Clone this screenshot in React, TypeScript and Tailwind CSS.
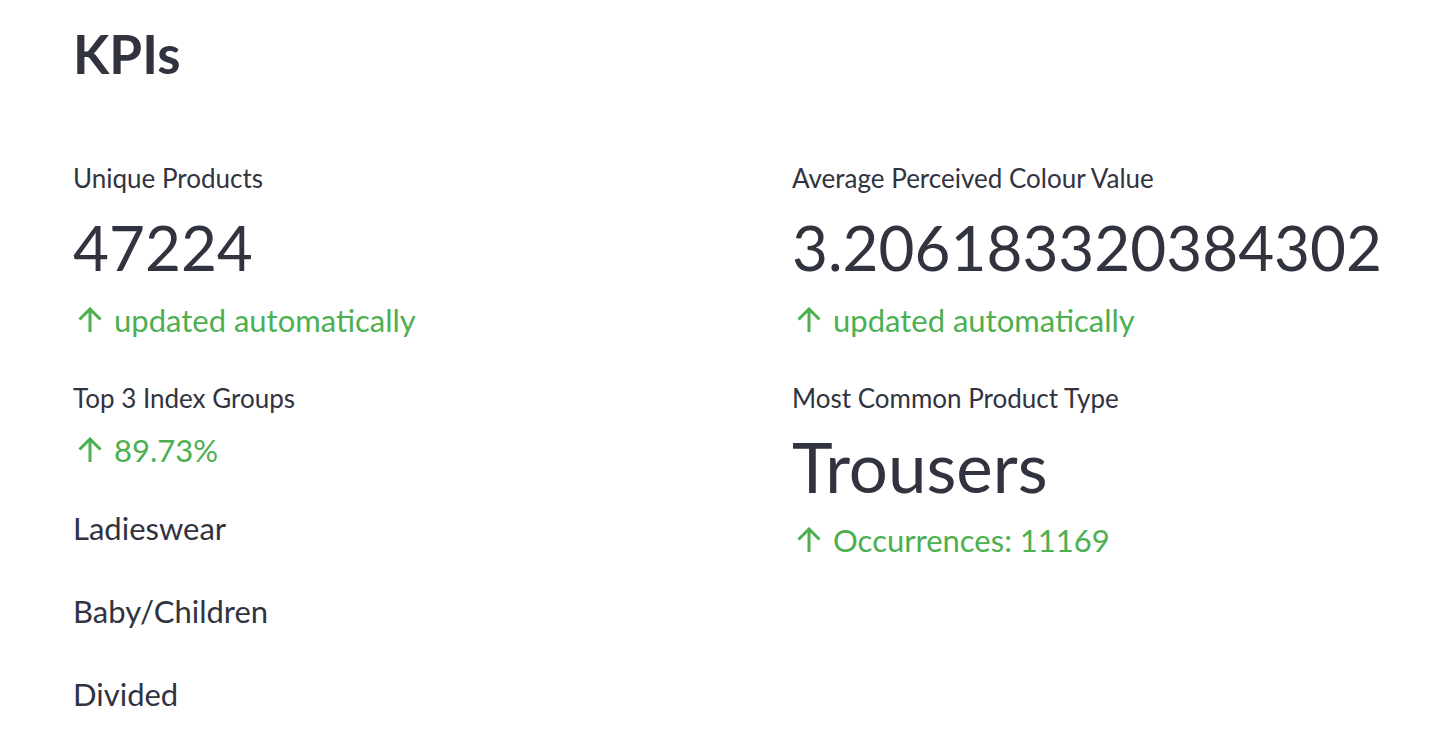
const dark = "text-[#31333f]";

function UpArrow() {
  return (
    <svg width="26" height="26" viewBox="0 0 26 26" fill="none" className="shrink-0">
      <path d="M13 25V2M2.5 12.5L13 2l10.5 10.5" stroke="#4caf50" strokeWidth="3" strokeLinecap="butt" />
    </svg>
  );
}

function Delta({ text }: { text: string }) {
  return (
    <div className="flex items-center h-[40px] text-[31px] leading-[40px] text-[#4caf50]">
      <span className="ml-[4px] mr-[11px]">
        <UpArrow />
      </span>
      {text}
    </div>
  );
}

function Label({ text }: { text: string }) {
  return <div className={`h-[32px] text-[26px] leading-[32px] ${dark}`}>{text}</div>;
}

function Value({ text, big }: { text: string; big?: boolean }) {
  return (
    <div className={`h-[80px] mt-[13px] leading-[80px] ${big ? "text-[69px]" : "text-[62px]"} ${dark}`}>
      {text}
    </div>
  );
}

export default function App() {
  return (
    <div
      className="min-h-screen bg-white pl-[73px] pt-[22px]"
      style={{ fontFamily: "Lato, 'Noto Sans', sans-serif" }}
    >
      <h2 className={`h-[64px] text-[53px] leading-[64px] font-bold ${dark}`}>KPIs</h2>

      <div className="flex mt-[76px]">
        {/* colonne gauche */}
        <div className="w-[719px]">
          <Label text="Unique Products" />
          <Value text="47224" />
          <div className="mt-[13px]">
            <Delta text="updated automatically" />
          </div>
          <div className="mt-[42px]">
            <Label text="Top 3 Index Groups" />
          </div>
          <div className="mt-[16px]">
            <Delta text="89.73%" />
          </div>
          <div className={`mt-[38px] flex flex-col gap-[43px] text-[31px] leading-[40px] ${dark}`}>
            <p>Ladieswear</p>
            <p>Baby/Children</p>
            <p>Divided</p>
          </div>
        </div>

        {/* colonne droite */}
        <div>
          <Label text="Average Perceived Colour Value" />
          <Value text="3.206183320384302" />
          <div className="mt-[13px]">
            <Delta text="updated automatically" />
          </div>
          <div className="mt-[42px]">
            <Label text="Most Common Product Type" />
          </div>
          <Value text="Trousers" big />
          <div className="mt-[13px]">
            <Delta text="Occurrences: 11169" />
          </div>
        </div>
      </div>
    </div>
  );
}
